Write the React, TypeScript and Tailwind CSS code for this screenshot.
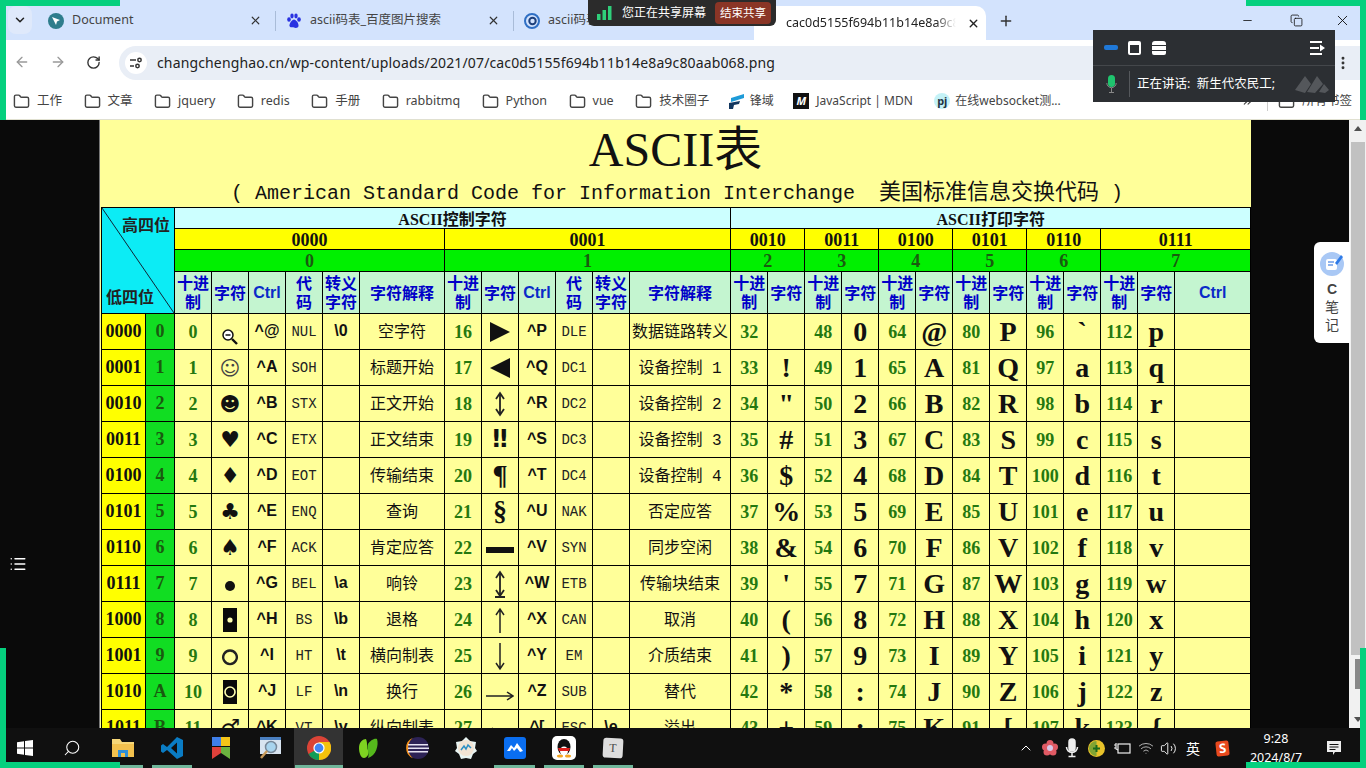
import type { ReactNode } from 'react'
import {
  ArrowLeft,
  ArrowRight,
  ChevronDown,
  ChevronUp,
  ChevronsRight,
  Copy,
  EllipsisVertical,
  Folder,
  List,
  Minus,
  Plus,
  RotateCw,
  Search,
  Volume2,
  Wifi,
  X,
} from 'lucide-react'

const bookmarks = ['工作', '文章', 'jquery', 'redis', '手册', 'rabbitmq', 'Python', 'vue', '技术圈子']

const brackets = [
  'left-0 top-0 w-[120px] h-[6px]',
  'left-0 top-0 w-[6px] h-[120px]',
  'right-0 top-0 w-[120px] h-[6px]',
  'right-0 top-0 w-[6px] h-[120px]',
  'left-0 bottom-0 w-[120px] h-[6px]',
  'left-0 bottom-0 w-[6px] h-[120px]',
  'right-0 bottom-0 w-[120px] h-[6px]',
  'right-0 bottom-0 w-[6px] h-[120px]',
]

const colWidths = [
  'w-[44px]', 'w-[29px]',
  'w-[37px]', 'w-[37px]', 'w-[37px]', 'w-[37px]', 'w-[37px]', 'w-[85px]',
  'w-[37px]', 'w-[37px]', 'w-[37px]', 'w-[37px]', 'w-[37px]', 'w-[101px]',
  'w-[37px]', 'w-[37px]', 'w-[37px]', 'w-[37px]', 'w-[37px]', 'w-[37px]',
  'w-[37px]', 'w-[37px]', 'w-[37px]', 'w-[37px]', 'w-[37px]', 'w-[37px]',
  'w-[76px]',
]

const bins = ['0000', '0001', '0010', '0011', '0100', '0101', '0110', '0111', '1000', '1001', '1010', '1011']
const hexes = ['0', '1', '2', '3', '4', '5', '6', '7', '8', '9', 'A', 'B']
const codesA = ['NUL', 'SOH', 'STX', 'ETX', 'EOT', 'ENQ', 'ACK', 'BEL', 'BS', 'HT', 'LF', 'VT']
const codesB = ['DLE', 'DC1', 'DC2', 'DC3', 'DC4', 'NAK', 'SYN', 'ETB', 'CAN', 'EM', 'SUB', 'ESC']
const ctrlA = ['^@', '^A', '^B', '^C', '^D', '^E', '^F', '^G', '^H', '^I', '^J', '^K']
const ctrlB = ['^P', '^Q', '^R', '^S', '^T', '^U', '^V', '^W', '^X', '^Y', '^Z', '^[']
const escA = ['\\0', '', '', '', '', '', '', '\\a', '\\b', '\\t', '\\n', '\\v']
const escB = ['', '', '', '', '', '', '', '', '', '', '', '\\e']
const descA = ['空字符', '标题开始', '正文开始', '正文结束', '传输结束', '查询', '肯定应答', '响铃', '退格', '横向制表', '换行', '纵向制表']
const descB = ['数据链路转义', '设备控制 1', '设备控制 2', '设备控制 3', '设备控制 4', '否定应答', '同步空闲', '传输块结束', '取消', '介质结束', '替代', '溢出']

const serif = "[font-family:'Liberation_Serif','Noto_Sans_CJK_SC',serif]"
const cell = 'border border-black p-0 text-center align-middle overflow-hidden whitespace-pre'
const numCell = `${cell} bg-[#ffff99] text-[#24780f] font-bold text-[18px] leading-[30px] ${serif}`
const ctrlCell = `${cell} bg-[#ffff99] text-[#111] font-bold text-[16px] leading-[30px] pb-[2px] [font-family:'Liberation_Sans',sans-serif]`
const codeCell = `${cell} bg-[#ffff99] text-[#222] text-[14px] leading-[30px] [font-family:'Liberation_Mono',monospace]`
const descCell = `${cell} bg-[#ffff99] text-[#111] text-[16px] leading-[30px] pt-[2px] [font-family:'Liberation_Mono','Noto_Sans_CJK_SC',sans-serif]`
const symCell = `${cell} bg-[#ffff99] text-[#111] text-[22px] leading-[30px] [font-family:'DejaVu_Sans',sans-serif]`
const bigCell = `${cell} bg-[#ffff99] text-[#111] font-bold text-[28px] leading-[34px] ${serif}`
const headCell = `${cell} bg-[#c4f5d0] text-[#0000c8] font-bold text-[16px] leading-[19px] [font-family:'Noto_Sans_CJK_SC',sans-serif]`
const ctrlHead = `${cell} bg-[#c4f5d0] text-[#0a2bc8] font-bold text-[16px] pt-px [font-family:'Liberation_Sans',sans-serif]`
const yellowCell = `${cell} bg-[#ffff00] text-[#111] font-bold text-[18px] leading-[17px] pt-[3px] ${serif}`
const greenCell = `${cell} bg-[#00f000] text-[#1a5a10] font-bold text-[18px] leading-[17px] pt-[3px] ${serif}`
const cyanCell = `${cell} bg-[#ccffff] text-[#111] font-bold text-[16px] leading-[17px] pt-[3px] ${serif}`

function Magnifier() {
  return (
    <svg width="18" height="18" viewBox="0 0 18 18" className="mx-auto mt-[10px] block">
      <circle cx="7" cy="7" r="5" fill="#fff" stroke="#111" strokeWidth="1.5" />
      <path d="M4.500 7h5" stroke="#111" strokeWidth="1.500" />
      <path d="M11 11l5 5" stroke="#111" strokeWidth="2.400" />
    </svg>
  )
}

function InverseBlock({ ring }: { ring?: boolean }) {
  return (
    <svg width="14" height="24" viewBox="0 0 14 24" className="mx-auto block">
      <rect width="14" height="24" fill="#0a0a0a" />
      {ring ? (
        <circle cx="7" cy="12" r="5" fill="none" stroke="#ffffb0" strokeWidth="1.600" />
      ) : (
        <circle cx="7" cy="12" r="2.600" fill="#ffffb0" />
      )}
    </svg>
  )
}

function Line({ w, h, d, sw = 1.5, className = '' }: { w: number; h: number; d: string; sw?: number; className?: string }) {
  return (
    <svg width={w} height={h} viewBox={`0 0 ${w} ${h}`} fill="none" stroke="#222" strokeWidth={sw} className={`mx-auto block ${className}`}>
      <path d={d} />
    </svg>
  )
}

const glyphA: ReactNode[] = [
  <Magnifier />,
  <span className="text-[20px] text-[#444]">☺</span>,
  <span className="text-[20px]">☻</span>,
  '♥',
  '♦',
  '♣',
  '♠',
  <span className="inline-block h-[10px] w-[10px] rounded-full bg-[#111]" />,
  <InverseBlock />,
  <Line w={18} h={18} d="M9 2.500a6.800 6.800 0 1 0 .01 0z" sw={2.4} className="mt-[3px]" />,
  <InverseBlock ring />,
  '♂',
]

const glyphB: ReactNode[] = [
  <svg width="20" height="20" viewBox="0 0 20 20" className="mx-auto block"><path d="M0 0l20 10L0 20z" fill="#111" /></svg>,
  <svg width="20" height="20" viewBox="0 0 20 20" className="mx-auto block"><path d="M20 0L0 10l20 10z" fill="#111" /></svg>,
  <Line w={12} h={26} d="M6 2v22M2 8l4-6 4 6M2 18l4 6 4-6" sw={1.8} />,
  <span className="font-bold text-[24px]">‼</span>,
  <span className={`font-bold text-[28px] ${serif}`}>¶</span>,
  <span className={`font-bold text-[28px] ${serif}`}>§</span>,
  <svg width="28" height="6" viewBox="0 0 28 6" className="mx-auto mt-[5px] block"><rect width="28" height="6" fill="#111" /></svg>,
  <Line w={12} h={28} d="M6 2v24M2 8l4-6 4 6M2 20l4 6 4-6M1 27h10" sw={1.800} />,
  <Line w={12} h={26} d="M6 26V2M2 8l4-6 4 6" />,
  <Line w={12} h={28} d="M6 0v26M2 20l4 6 4-6" className="mt-[2px]" />,
  <Line w={28} h={12} d="M0 6h27M21 2l6 4-6 4" className="mt-[8px]" />,
  <Line w={28} h={12} d="M28 6H1M7 2L1 6l6 4" className="mt-[8px]" />,
]

function AsciiTable() {
  const pairs = [2, 3, 4, 5, 6, 7]
  return (
    <table className="ml-px w-[1150px] table-fixed border-collapse">
      <colgroup>
        {colWidths.map((w, i) => (
          <col key={i} className={w} />
        ))}
      </colgroup>
      <tbody>
        <tr className="h-[21px]">
          <td colSpan={2} rowSpan={4} className={`${cell} relative bg-[#0cecf5]`}>
            <svg className="absolute inset-0 h-full w-full" viewBox="0 0 73 105" preserveAspectRatio="none">
              <path d="M0 0L73 105" stroke="#123" strokeWidth="1" />
            </svg>
            <div className="flex h-[105px] flex-col justify-between text-[16px] font-bold text-[#222] [font-family:'Noto_Sans_CJK_SC',sans-serif]">
              <span className="pt-[4px] pr-[4px] text-right">高四位</span>
              <span className="pb-[5px] pl-[4px] text-left">低四位</span>
            </div>
          </td>
          <td colSpan={12} className={cyanCell}>ASCII控制字符</td>
          <td colSpan={13} className={cyanCell}>ASCII打印字符</td>
        </tr>
        <tr className="h-[21px]">
          <td colSpan={6} className={yellowCell}>0000</td>
          <td colSpan={6} className={yellowCell}>0001</td>
          {bins.slice(2, 7).map(b => (
            <td key={b} colSpan={2} className={yellowCell}>{b}</td>
          ))}
          <td colSpan={3} className={yellowCell}>0111</td>
        </tr>
        <tr className="h-[21px]">
          <td colSpan={6} className={greenCell}>0</td>
          <td colSpan={6} className={greenCell}>1</td>
          {[2, 3, 4, 5, 6].map(n => (
            <td key={n} colSpan={2} className={greenCell}>{n}</td>
          ))}
          <td colSpan={3} className={greenCell}>7</td>
        </tr>
        <tr className="h-[42px]">
          {[0, 1].map(g => [
            <td key={`a${g}`} className={headCell}>十进<br />制</td>,
            <td key={`b${g}`} className={headCell}>字符</td>,
            <td key={`c${g}`} className={ctrlHead}>Ctrl</td>,
            <td key={`d${g}`} className={headCell}>代<br />码</td>,
            <td key={`e${g}`} className={headCell}>转义<br />字符</td>,
            <td key={`f${g}`} className={headCell}>字符解释</td>,
          ])}
          {pairs.map(n => [
            <td key={`x${n}`} className={headCell}>十进<br />制</td>,
            <td key={`y${n}`} className={headCell}>字符</td>,
          ])}
          <td className={ctrlHead}>Ctrl</td>
        </tr>
        {bins.map((bin, i) => (
          <tr key={bin} className="h-[36px]">
            <td className={`${cell} bg-[#ffff00] text-[#111] font-bold text-[18px] ${serif}`}>{bin}</td>
            <td className={`${cell} bg-[#11dd22] text-[#1a5a10] font-bold text-[18px] ${serif}`}>{hexes[i]}</td>
            <td className={numCell}>{i}</td>
            <td className={symCell}>{glyphA[i]}</td>
            <td className={ctrlCell}>{ctrlA[i]}</td>
            <td className={codeCell}>{codesA[i]}</td>
            <td className={`${ctrlCell} text-[15px]`}>{escA[i]}</td>
            <td className={descCell}>{descA[i]}</td>
            <td className={numCell}>{i + 16}</td>
            <td className={symCell}>{glyphB[i]}</td>
            <td className={ctrlCell}>{ctrlB[i]}</td>
            <td className={codeCell}>{codesB[i]}</td>
            <td className={`${ctrlCell} text-[15px]`}>{escB[i]}</td>
            <td className={descCell}>{descB[i]}</td>
            {pairs.map(n => [
              <td key={`n${n}`} className={numCell}>{n * 16 + i}</td>,
              <td key={`c${n}`} className={bigCell}>{String.fromCharCode(n * 16 + i)}</td>,
            ])}
            <td className={`${cell} bg-[#ffff99]`} />
          </tr>
        ))}
      </tbody>
    </table>
  )
}

function Tab({ icon, title }: { icon: ReactNode; title: string }) {
  return (
    <div className="flex w-[238px] shrink-0 items-center pl-[8px]">
      {icon}
      <span className="ml-[8px] text-[12.5px] text-[#444]">{title}</span>
      <X size={13} strokeWidth={2.2} className="ml-auto text-[#333]" />
      <span className="mr-[2px] ml-[13px] h-[20px] w-px bg-[#a9bcd8]" />
    </div>
  )
}

function TaskIcon({ children, active }: { children: ReactNode; active?: boolean }) {
  return (
    <div className={`flex h-[40px] w-[49px] shrink-0 items-center justify-center ${active ? 'bg-[#333]' : ''}`}>
      {children}
    </div>
  )
}

export default function App() {
  return (
    <div className="relative flex h-[768px] w-[1366px] flex-col overflow-hidden bg-black [font-family:'Noto_Sans','Noto_Sans_CJK_SC',sans-serif]">
      {/* tab strip */}
      <div className="flex h-[40px] shrink-0 items-end bg-[#d3e3fd]">
        <div className="mb-[6px] ml-[8px] mr-[8px] flex h-[28px] w-[24px] shrink-0 items-center justify-center self-end rounded-[8px] bg-[#dfe9fb]">
          <ChevronDown size={14} strokeWidth={2.6} className="text-[#222]" />
        </div>
        <div className="flex h-[40px] items-center pt-px">
          <Tab
            title="Document"
            icon={
              <svg width="16" height="16" viewBox="0 0 16 16">
                <circle cx="8" cy="8" r="8" fill="#2e7d8c" />
                <path d="M4 4l8 3-3 1.500L8 12z" fill="#fff" />
              </svg>
            }
          />
          <Tab
            title="ascii码表_百度图片搜索"
            icon={
              <svg width="16" height="16" viewBox="0 0 16 16" fill="#2932e1">
                <ellipse cx="3" cy="6.500" rx="1.800" ry="2.300" />
                <ellipse cx="6" cy="3" rx="1.700" ry="2.400" />
                <ellipse cx="10" cy="3" rx="1.700" ry="2.400" />
                <ellipse cx="13" cy="6.500" rx="1.800" ry="2.300" />
                <path d="M8 6.500c2 0 5 4 4.500 6.500S9 15 8 14.500 4 15 3.500 13 6 6.500 8 6.500z" />
              </svg>
            }
          />
          <div className="flex w-[238px] shrink-0 items-center pl-[8px]">
            <svg width="16" height="16" viewBox="0 0 16 16">
              <circle cx="8" cy="8" r="7" fill="none" stroke="#2f6fc4" strokeWidth="2" />
              <circle cx="8.500" cy="8" r="3.200" fill="none" stroke="#1d3f7a" strokeWidth="2" />
            </svg>
            <span className="ml-[8px] text-[12.5px] text-[#444]">ascii码表</span>
          </div>
          <div className="flex h-[34px] w-[232px] shrink-0 items-center self-end rounded-t-[10px] bg-white pl-[32px]">
            <span className="w-[170px] overflow-hidden whitespace-nowrap text-[12.5px] text-[#222] [mask-image:linear-gradient(to_right,black_88%,transparent)]">
              cac0d5155f694b11b14e8a9c80aab068.png
            </span>
            <X size={13} strokeWidth={2.6} className="ml-[11px] text-[#222]" />
          </div>
          <Plus size={16} strokeWidth={2.2} className="ml-[12px] text-[#333]" />
        </div>
        <div className="ml-auto flex h-[40px] items-center">
          <Minus size={13} strokeWidth={1.5} className="mr-[36px] text-[#111]" />
          <Copy size={13} strokeWidth={1.5} className="mr-[31px] text-[#111]" />
          <X size={17} strokeWidth={1.3} className="mr-[15px] text-[#111]" />
        </div>
      </div>

      {/* address bar */}
      <div className="flex h-[40px] shrink-0 items-center bg-white pt-[4px]">
        <ArrowLeft size={16} strokeWidth={2} className="ml-[14px] text-[#999]" />
        <ArrowRight size={16} strokeWidth={2} className="ml-[20px] text-[#999]" />
        <RotateCw size={15} strokeWidth={2.2} className="ml-[20px] text-[#333]" />
        <div className="ml-[18px] flex h-[34px] flex-1 items-center self-end rounded-l-[17px] bg-[#e9eef6] pl-[6px]">
          <div className="flex h-[22px] w-[22px] items-center justify-center rounded-full bg-white">
            <svg width="14" height="14" viewBox="0 0 14 14" fill="none" stroke="#333" strokeWidth="1.5">
              <path d="M1 4h6M1 10h4" />
              <circle cx="10.500" cy="4" r="1.700" />
              <circle cx="8.500" cy="10" r="1.700" />
            </svg>
          </div>
          <span className="ml-[10px] pb-[2px] text-[14px] tracking-[0.01em] text-[#222]">
            changchenghao.cn/wp-content/uploads/2021/07/cac0d5155f694b11b14e8a9c80aab068.png
          </span>
          <EllipsisVertical size={16} strokeWidth={2.4} className="mr-[15px] ml-auto text-[#333]" />
        </div>
      </div>

      {/* bookmarks */}
      <div className="flex h-[40px] shrink-0 items-center border-b border-[#e0e0d0] bg-white pt-[3px] pl-[13px] text-[12.5px] text-[#444]">
        <div className="flex items-center gap-[21.5px]">
          {bookmarks.map(b => (
            <div key={b} className="flex items-center gap-[7px]">
              <Folder size={17} strokeWidth={2} className="text-[#444]" />
              <span>{b}</span>
            </div>
          ))}
          <div className="-ml-[3px] flex items-center gap-[5px] text-[12px]">
            <svg width="17" height="17" viewBox="0 0 17 17">
              <path d="M3 5l13-4v4L3 9z" fill="#1e9bd8" />
              <path d="M1 10l11-2-1 3-5 1-1 4H1z" fill="#12365f" />
            </svg>
            <span>锋域</span>
          </div>
          <div className="-ml-[2px] flex items-center gap-[7px] text-[12px]">
            <span className="flex h-[16px] w-[16px] items-center justify-center bg-[#111] text-[11px] font-bold italic text-white">M</span>
            <span>JavaScript | MDN</span>
          </div>
          <div className="flex items-center gap-[5px] text-[12px]">
            <span className="flex h-[16px] w-[16px] items-center justify-center rounded-full bg-[#c4f2f7] text-[11px] font-bold text-[#234]">pj</span>
            <span>在线websocket测...</span>
          </div>
        </div>
        <ChevronsRight size={13} className="ml-auto text-[#444]" />
        <span className="ml-[13px] h-[20px] w-px bg-[#ccc]" />
        <Folder size={17} strokeWidth={2} className="ml-[10px] text-[#444]" />
        <span className="mr-[14px] ml-[7px]">所有书签</span>
      </div>

      {/* page */}
      <div className="flex min-h-0 flex-1">
        <div className="w-[99px] shrink-0 bg-[#0a0a0a]" />
        <div className="w-[1152px] shrink-0 overflow-hidden border-l border-[#777] bg-[#ffff99]">
          <div className="flex h-[87px] flex-col items-center">
            <div className={`mt-[1px] text-[48px] leading-[58px] text-[#111] ${serif}`}>ASCII表</div>
            <div className="mt-[3px] whitespace-pre pl-[3px] text-[20px] leading-[24px] text-[#111] [font-family:'Liberation_Mono','Noto_Sans_CJK_SC',monospace]">
              ( American Standard Code for Information Interchange  <span className="text-[22px]">美国标准信息交换代码</span> )
            </div>
          </div>
          <AsciiTable />
        </div>
        <div className="flex-1 bg-[#0a0a0a]" />
        <div className="flex w-[17px] shrink-0 flex-col items-center bg-[#f1f1f1]">
          <div className="mt-[6px] h-0 w-0 border-x-[4px] border-b-[5px] border-x-transparent border-b-[#505050]" />
          <div className="mt-[11px] h-[513px] w-[14px] bg-[#c1c1c1]" />
          <div className="mt-[4px] h-[30px] w-[5px] bg-[#888]" />
          <div className="mt-auto mb-[6px] h-0 w-0 border-x-[4px] border-t-[5px] border-x-transparent border-t-[#505050]" />
        </div>
      </div>

      {/* taskbar */}
      <div className="flex h-[40px] shrink-0 items-center bg-[#101010] text-white">
        <TaskIcon>
          <svg width="16" height="16" viewBox="0 0 16 16" fill="#fff">
            <path d="M0 2.200l7-1v6.300H0zM8 1l8-1v7.500H8zM0 8.500h7v6.300l-7-1zM8 8.500h8V16l-8-1z" />
          </svg>
        </TaskIcon>
        <TaskIcon>
          <Search size={18} strokeWidth={1.4} className="-ml-[3px] -scale-x-100" />
        </TaskIcon>
        <TaskIcon>
          <svg width="24" height="22" viewBox="0 0 24 22">
            <path d="M1 2h8l2 3h12v15H1z" fill="#f6d778" />
            <path d="M1 7h22v13H1z" fill="#f2c14e" />
            <path d="M7 20v-7h10v7h-3v-4h-4v4z" fill="#2f8fd8" />
          </svg>
        </TaskIcon>
        <TaskIcon>
          <svg width="24" height="24" viewBox="0 0 24 24">
            <path d="M17 1l6 3v16l-6 3-10-9-4 3-2-1.500V9.500L3 8l4 3z" fill="#0a7cc4" />
            <path d="M17 6.500L11 12l6 5.500z" fill="#101010" />
          </svg>
        </TaskIcon>
        <TaskIcon>
          <svg width="20" height="24" viewBox="0 0 20 24">
            <rect x="1" y="1" width="9" height="9" fill="#3f7fe8" />
            <rect x="10" y="1" width="9" height="9" fill="#f5c518" />
            <path d="M1 11h9v6l-9 6z" fill="#e0413a" />
            <path d="M10 11h9v12l-9-6z" fill="#6cb33f" />
          </svg>
        </TaskIcon>
        <TaskIcon>
          <svg width="24" height="26" viewBox="0 0 24 26">
            <rect x="2" y="2" width="21" height="17" fill="#d8e4f0" />
            <rect x="2" y="2" width="21" height="3" fill="#4a7fc0" />
            <circle cx="13" cy="12" r="5.500" fill="#a8d4ee" stroke="#789" strokeWidth="1.500" />
            <path d="M9 16l-6 7" stroke="#c89a5a" strokeWidth="2.500" />
          </svg>
        </TaskIcon>
        <TaskIcon active>
          <svg width="24" height="24" viewBox="0 0 24 24">
            <circle cx="12" cy="12" r="12" fill="#db4437" />
            <path d="M12 12L1.600 18A12 12 0 0 0 12 24a12 12 0 0 0 4-1z" fill="#0f9d58" />
            <path d="M12 6h10.500A12 12 0 0 1 12 24z" fill="#f4c20d" />
            <circle cx="12" cy="12" r="5.600" fill="#fff" />
            <circle cx="12" cy="12" r="4.400" fill="#4285f4" />
          </svg>
        </TaskIcon>
        <TaskIcon>
          <svg width="24" height="24" viewBox="0 0 24 24">
            <path d="M3 12c0-6 4-9 7-9 2 5 0 8 2 11s-1 8-4 8-5-5-5-10z" fill="#7ed321" />
            <path d="M12 8c2-3 6-6 9-5 2 6-1 17-9 19 2-5-2-9 0-14z" fill="#55b81c" />
          </svg>
        </TaskIcon>
        <TaskIcon>
          <svg width="24" height="24" viewBox="0 0 24 24">
            <circle cx="13" cy="12" r="11" fill="#2c2255" />
            <path d="M8 1.800a11 11 0 0 0 0 20.400A13 13 0 0 1 8 1.800z" fill="#f7941e" />
            <path d="M3 8h20v1.600H3zM3 11.500h21v1.600H3zM3 15h20v1.600H3z" fill="#e6e4f2" />
          </svg>
        </TaskIcon>
        <TaskIcon>
          <svg width="24" height="24" viewBox="0 0 24 24">
            <path d="M12 1l4 4 6 1-1 6 2 3-4 3-2 5-5-1-5 1-2-5-4-3 2-3-1-6 6-1z" fill="#e9f5f3" />
            <circle cx="12" cy="12" r="8" fill="#f2e4d4" />
            <path d="M7 14l3-4 2 3 2-4 3 3" fill="none" stroke="#2b8fc4" strokeWidth="1.500" />
          </svg>
        </TaskIcon>
        <TaskIcon>
          <svg width="22" height="22" viewBox="0 0 22 22">
            <rect width="22" height="22" rx="3" fill="#0a6ef0" />
            <path d="M3 14l4-6 3 3 3-5 6 8-3 1-3-4-3 3-2-3-2 3z" fill="#fff" />
          </svg>
        </TaskIcon>
        <TaskIcon>
          <svg width="24" height="24" viewBox="0 0 24 24">
            <rect width="24" height="24" rx="5" fill="#fff" />
            <ellipse cx="12" cy="11" rx="6.500" ry="8" fill="#111" />
            <ellipse cx="12" cy="15" rx="4" ry="4.500" fill="#fff" />
            <path d="M6 12h12l-1 3H7z" fill="#e0201c" />
            <ellipse cx="8" cy="20" rx="3" ry="1.500" fill="#f5a623" />
            <ellipse cx="16" cy="20" rx="3" ry="1.500" fill="#f5a623" />
          </svg>
        </TaskIcon>
        <TaskIcon>
          <div className="flex h-[20px] w-[20px] rotate-[3deg] items-center justify-center rounded-[3px] bg-[#ddd] text-[12px] text-[#444] [font-family:'Liberation_Serif',serif]">
            T
          </div>
        </TaskIcon>

        <div className="ml-auto flex items-center">
          <ChevronUp size={16} strokeWidth={1.5} className="mr-[8px]" />
          <svg width="16" height="16" viewBox="0 0 16 16" className="mr-[7px]">
            <circle cx="8" cy="3.500" r="3.500" fill="#e05a64" />
            <circle cx="3.500" cy="7" r="3.500" fill="#e05a64" />
            <circle cx="12.500" cy="7" r="3.500" fill="#e05a64" />
            <circle cx="5" cy="12" r="3.500" fill="#e05a64" />
            <circle cx="11" cy="12" r="3.500" fill="#e05a64" />
            <circle cx="8" cy="8" r="3" fill="#d8c8e8" />
          </svg>
          <svg width="14" height="20" viewBox="0 0 14 20" className="mr-[9px]" fill="none" stroke="#eee" strokeWidth="1.500">
            <rect x="4" y="1" width="6" height="12" rx="3" fill="#eee" />
            <path d="M1.500 9a5.500 5.500 0 0 0 11 0M7 15v3M3.500 18.500h7" />
          </svg>
          <svg width="17" height="17" viewBox="0 0 17 17" className="mr-[8px]">
            <circle cx="8.500" cy="8.500" r="8.500" fill="#e8c22a" />
            <path d="M8.500 1a7.500 7.500 0 0 0 0 15z" fill="#3a8f3a" opacity=".6" />
            <path d="M5 8.500h7M8.500 5v7" stroke="#1a6a1a" strokeWidth="2" />
          </svg>
          <svg width="18" height="13" viewBox="0 0 18 13" className="mr-[7px]" fill="none" stroke="#eee" strokeWidth="1.200">
            <rect x="5" y="2" width="12" height="9" />
            <path d="M1 3h2M1 6h2M3 1v6l2 1" />
          </svg>
          <Wifi size={16} strokeWidth={1.4} className="mr-[6px] text-[#bbb]" />
          <Volume2 size={17} strokeWidth={1.3} className="mr-[9px]" />
          <span className="mr-[16px] text-[14px]">英</span>
          <div className="mr-[13px] flex h-[15px] w-[13px] rotate-[-6deg] items-center justify-center rounded-[2px] bg-[#e8491d] text-[13px] font-bold leading-none">
            S
          </div>
          <div className="flex w-[68px] flex-col items-center text-[12.5px] leading-[19px]">
            <span>9:28</span>
            <span>2024/8/7</span>
          </div>
          <svg width="16" height="16" viewBox="0 0 16 16" className="mr-[24px] ml-[16px]" fill="#eee">
            <path d="M1 1h14v11H9l-2 3v-3H1z" />
            <path d="M3.500 4.500h9M3.500 7h9M3.500 9.500h6" stroke="#101010" strokeWidth="1" />
          </svg>
        </div>
      </div>
      <div className="flex h-0 shrink-0">
        <div className="ml-[120px] h-[3px] w-[23px] -translate-y-[3px] bg-[#6fb69a]" />
        <div className="ml-[9px] h-[3px] w-[40px] -translate-y-[3px] bg-[#6fb69a]" />
        <div className="ml-[103px] h-[3px] w-[48px] -translate-y-[3px] bg-[#6fb69a]" />
        <div className="ml-[151px] h-[3px] w-[41px] -translate-y-[3px] bg-[#6fb69a]" />
        <div className="ml-[9px] h-[3px] w-[40px] -translate-y-[3px] bg-[#6fb69a]" />
        <div className="ml-[9px] h-[3px] w-[40px] -translate-y-[3px] bg-[#6fb69a]" />
      </div>

      {/* screen share pill */}
      <div className="absolute top-0 left-[588px] flex h-[26px] w-[188px] items-center rounded-b-[6px] bg-[#2b2b2b] pl-[9px] text-white">
        <svg width="15" height="14" viewBox="0 0 15 14" fill="#2fcf7a">
          <rect x="0" y="8" width="3.500" height="6" />
          <rect x="5.500" y="4" width="3.500" height="10" />
          <rect x="11" y="0" width="3.500" height="14" />
        </svg>
        <span className="ml-[10px] text-[12px]">您正在共享屏幕</span>
        <span className="ml-[9px] flex h-[22px] w-[56px] items-center justify-center rounded-[4px] bg-[#8a3526] text-[11.5px]">结束共享</span>
      </div>

      {/* meeting panel */}
      <div className="absolute top-[30px] left-[1093px] flex h-[72px] w-[242px] flex-col bg-[#2c2f33] text-white">
        <div className="flex h-[36px] items-center border-b border-[#44474b] pl-[11px]">
          <span className="h-[5px] w-[14px] rounded-[2px] bg-[#1f78d8]" />
          <span className="ml-[10px] h-[14px] w-[13px] rounded-[2px] border-[2px] border-t-[4px] border-white" />
          <div className="ml-[11px] flex flex-col gap-[1px]">
            <span className="h-[4px] w-[14px] rounded-t-[3px] bg-white" />
            <span className="h-[4px] w-[14px] bg-white" />
            <span className="h-[4px] w-[14px] rounded-b-[2px] bg-white" />
          </div>
          <svg width="15" height="14" viewBox="0 0 15 14" className="mr-[10px] ml-auto" fill="#fff">
            <path d="M0 0h12v2H0zM0 6h9v2H0zM0 12h12v2H0zM10 3.500l5 3.500-5 3.500z" />
          </svg>
        </div>
        <div className="flex h-[36px] items-center pl-[13px]">
          <svg width="11" height="18" viewBox="0 0 11 18" fill="none">
            <rect x="2" y="0" width="7" height="12" rx="3.500" fill="#1fc46e" />
            <path d="M.800 8a4.700 4.700 0 0 0 9.400 0M5.500 13v4M3 17.500h5" stroke="#888" strokeWidth="1" />
          </svg>
          <span className="ml-[12px] h-[26px] w-px bg-[#55585c]" />
          <span className="ml-[7px] whitespace-pre text-[12.5px]">正在讲话:  新生代农民工;</span>
          <svg width="34" height="20" viewBox="0 0 34 20" className="mr-[6px] ml-auto" fill="#54575b">
            <path d="M0 16L10 2l6 8-6 9zM12 18L22 2l6 8-8 9zM24 18l5-8 5 6-4 3z" />
          </svg>
        </div>
      </div>

      {/* note widget */}
      <div className="absolute top-[242px] left-[1314px] flex h-[101px] w-[36px] flex-col items-center rounded-l-[6px] bg-white pt-[10px] text-[14px] leading-[18px] text-[#444]">
        <svg width="24" height="24" viewBox="0 0 24 24" className="mb-[4px]">
          <circle cx="12" cy="12" r="12" fill="#a9c8f5" />
          <rect x="6" y="7" width="11" height="11" rx="2" fill="#fff" />
          <path d="M8 10h6M8 13h5" stroke="#6a9ae8" strokeWidth="1.500" />
          <path d="M15 11l6-8 2 2-6 8z" fill="#2f7be8" />
        </svg>
        <span className="font-bold [font-family:'Liberation_Sans',sans-serif]">C</span>
        <span>笔</span>
        <span>记</span>
      </div>

      {/* outline toggle */}
      <List size={18} strokeWidth={2} className="absolute top-[555px] left-[9px] text-white" />

      {/* capture frame */}
      {brackets.map(b => (
        <div key={b} className={`absolute bg-[#05d07e] ${b}`} />
      ))}
    </div>
  )
}
